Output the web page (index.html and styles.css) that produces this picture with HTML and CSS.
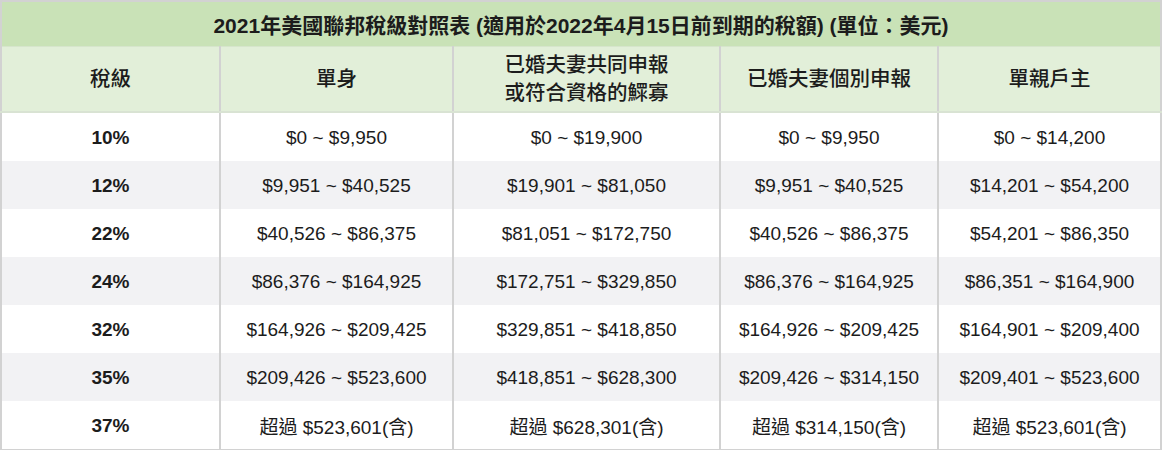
FILE: index.html
```html
<!DOCTYPE html>
<html lang="zh-Hant">
<head>
<meta charset="utf-8">
<link rel="stylesheet" href="styles.css">
</head>
<body>
<table class="tax">
  <colgroup>
    <col class="c1"><col class="c2"><col class="c3"><col class="c4"><col class="c5">
  </colgroup>
  <thead>
    <tr class="title-row"><th colspan="5">2021年美國聯邦稅級對照表 (適用於2022年4月15日前到期的稅額) (單位：美元)</th></tr>
    <tr class="head-row">
      <th>稅級</th>
      <th>單身</th>
      <th>已婚夫妻共同申報<br>或符合資格的鰥寡</th>
      <th>已婚夫妻個別申報</th>
      <th>單親戶主</th>
    </tr>
  </thead>
  <tbody>
    <tr><td class="rate">10%</td><td>$0 ~ $9,950</td><td>$0 ~ $19,900</td><td>$0 ~ $9,950</td><td>$0 ~ $14,200</td></tr>
    <tr><td class="rate">12%</td><td>$9,951 ~ $40,525</td><td>$19,901 ~ $81,050</td><td>$9,951 ~ $40,525</td><td>$14,201 ~ $54,200</td></tr>
    <tr><td class="rate">22%</td><td>$40,526 ~ $86,375</td><td>$81,051 ~ $172,750</td><td>$40,526 ~ $86,375</td><td>$54,201 ~ $86,350</td></tr>
    <tr><td class="rate">24%</td><td>$86,376 ~ $164,925</td><td>$172,751 ~ $329,850</td><td>$86,376 ~ $164,925</td><td>$86,351 ~ $164,900</td></tr>
    <tr><td class="rate">32%</td><td>$164,926 ~ $209,425</td><td>$329,851 ~ $418,850</td><td>$164,926 ~ $209,425</td><td>$164,901 ~ $209,400</td></tr>
    <tr><td class="rate">35%</td><td>$209,426 ~ $523,600</td><td>$418,851 ~ $628,300</td><td>$209,426 ~ $314,150</td><td>$209,401 ~ $523,600</td></tr>
    <tr><td class="rate">37%</td><td>超過 $523,601(含)</td><td>超過 $628,301(含)</td><td>超過 $314,150(含)</td><td>超過 $523,601(含)</td></tr>
  </tbody>
</table>
</body>
</html>
```
FILE: styles.css
```css
html, body {
  margin: 0;
  padding: 0;
  background: #ffffff;
}
body {
  font-family: "Liberation Sans", "Noto Sans CJK TC", sans-serif;
  color: #1c1c1c;
}
.tax {
  width: 1162px;
  border-collapse: collapse;
  table-layout: fixed;
  border: 2px solid #d2d2d2;
}
.c1 { width: 219px; }
.c2 { width: 233px; }
.c3 { width: 267px; }
.c4 { width: 218px; }
.c5 { width: 223px; }

.tax th, .tax td {
  border-left: 2px solid #d2d2d2;
  border-right: 2px solid #d2d2d2;
  text-align: center;
  padding: 0;
}
.title-row th {
  background: #c9e2b7;
  height: 43px;
  padding-bottom: 1px;
  font-size: 21px;
  font-weight: bold;
  border-bottom: 1px solid #d6e5cc;
}
.head-row th {
  background: #e2efd9;
  height: 64px;
  font-size: 20.5px;
  font-weight: 500;
  line-height: 28px;
  border-bottom: 2px solid #d9e3d3;
}
.tax td {
  height: 47px;
  padding-top: 1px;
  font-size: 19px;
}
.tax tbody tr:nth-child(even) td {
  background: #f2f2f4;
}
.tax td.rate {
  font-weight: bold;
}
```
